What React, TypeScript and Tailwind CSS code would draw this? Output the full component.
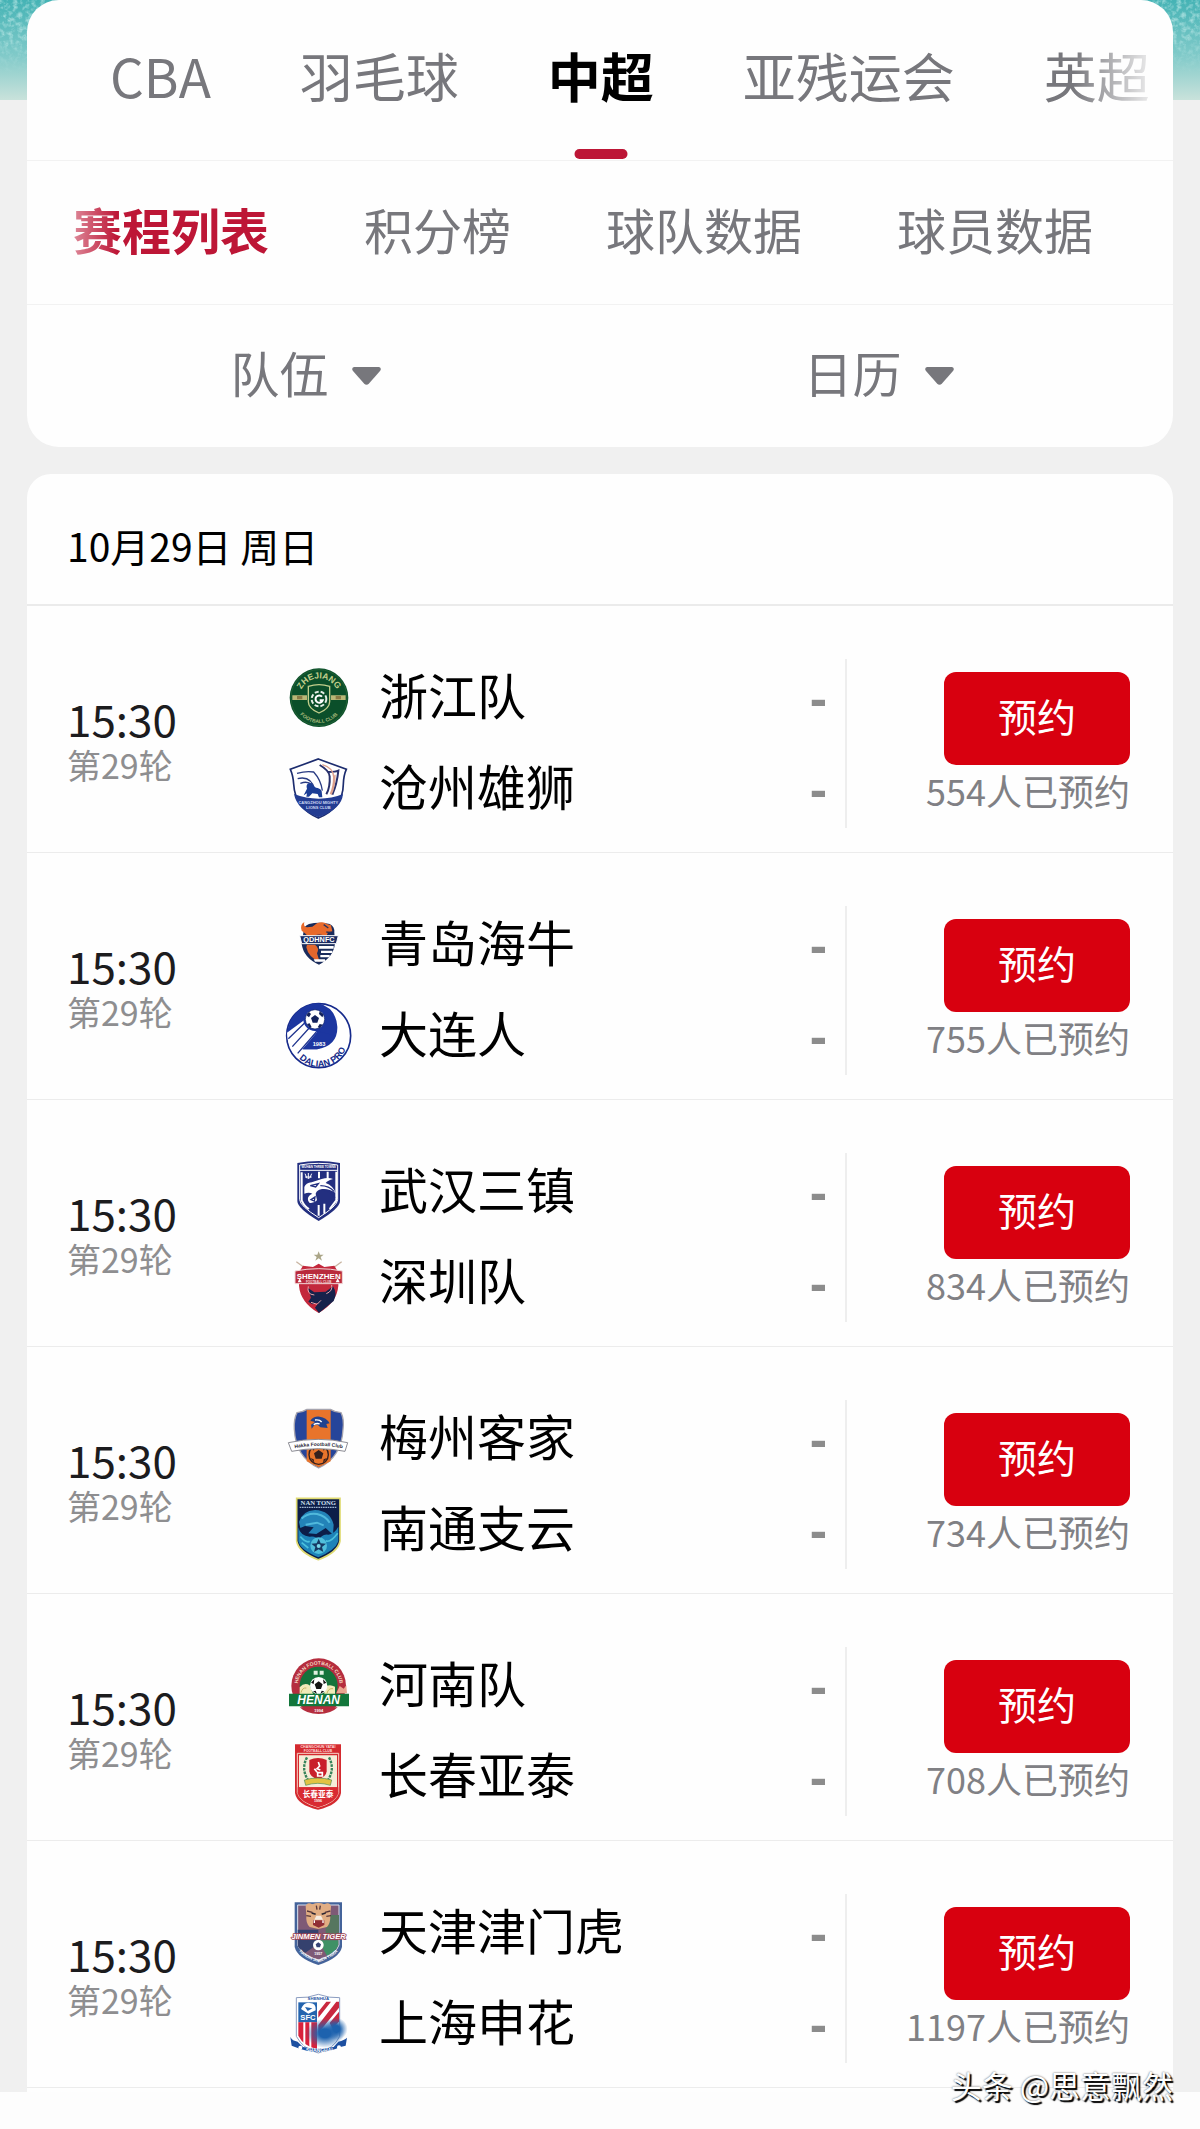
import { useState, type ReactNode } from "react";
import clsx from "clsx";

function Crest({ viewBox, label, children }: { viewBox: string; label: string; children: ReactNode }) {
  return (
    <svg
      viewBox={viewBox}
      className="h-[68px] w-[68px] shrink-0"
      role="img"
      aria-label={label}
      fontFamily="Liberation Sans, sans-serif"
      fontWeight="bold"
      textAnchor="middle"
    >
      {children}
    </svg>
  );
}

function Zhejiang() {
  return (
    <Crest viewBox="46 42 204 204" label="浙江队">
      <circle cx="148" cy="143" r="88" fill="#0b4f2a" />
      <circle cx="148" cy="143" r="84" fill="none" stroke="#2c6a3a" strokeWidth="2" />
      <path id="zj-top" d="M90 143a58 58 0 0 1 116 0" fill="none" />
      <path id="zj-bottom" d="M72 143a76 76 0 0 0 152 0" fill="none" />
      <text fontSize="26" fill="#c3cf8c">
        <textPath href="#zj-top" startOffset="50%">ZHEJIANG</textPath>
      </text>
      <text fontSize="15" fill="#a9bb7c">
        <textPath href="#zj-bottom" startOffset="50%">FOOTBALL CLUB</textPath>
      </text>
      <path d="M68 136h44v14H68zM184 136h44v14h-44z" fill="#b9b877" />
      <path d="M82 138h16v10H82zM198 138h16v10h-16z" fill="#8a7a45" />
      <path d="M116 109q32-10 64 0v46q0 20-32 34-32-14-32-34z" fill="#0b4f2a" stroke="#c3cf8c" strokeWidth="4" />
      <circle cx="148" cy="147" r="22" fill="none" stroke="#e4efe6" strokeWidth="6" strokeDasharray="12 6" />
      <path d="M157 140a11 11 0 1 0 2 11h-9" fill="none" stroke="#fff" strokeWidth="6" />
    </Crest>
  );
}

function Cangzhou() {
  return (
    <Crest viewBox="46 315 204 204" label="沧州雄狮">
      <path d="M146 327l84 31q-8 17-9 44-1 72-75 102-70-30-74-102-2-27-10-44z" fill="#fff" stroke="#1c2c6e" strokeWidth="5" />
      <path d="M82 370q28-8 50-4 22 24 26 56M84 386q40-10 52 34M92 400q22-8 34 4" fill="none" stroke="#2a3c83" strokeWidth="4" />
      <path d="M150 345q28 16 30 34 2 32-10 54M176 366q22 0 30-4-4 40-18 72" fill="none" stroke="#28306c" strokeWidth="6" />
      <path d="M158 344q34 10 34 38 0 30-10 50M196 374q0 36-12 60" fill="none" stroke="#dca08c" strokeWidth="4" />
      <path d="M102 436l10-20q-4-10 4-16l10 0q8 14 18 14 10 2 12 10l2 18h-10l-4-10-16-2-10 10h-8l2-10z" fill="#1b3d96" />
      <path d="M73 432q36 14 74 14 40 0 73-14-4 46-74 70-64-22-73-70z" fill="#233c92" />
      <text x="146" y="463" fontSize="12" fill="#cdd8f4">CANGZHOU MIGHTY</text>
      <text x="146" y="478" fontSize="12" fill="#cdd8f4">LIONS CLUB</text>
    </Crest>
  );
}

function Qingdao() {
  return (
    <Crest viewBox="46 33 204 204" label="青岛海牛">
      <path d="M102 92q0-14 16-20 30-8 62 0 16 8 14 26l2 32q-4 42-48 64-46-20-52-62z" fill="#1a2c5c" />
      <path d="M96 92q-6-18 8-26-4 14 8 16l16-2 14-10q18-8 30 2l12 4 4 18-12 2-6 12q-20-8-34-2l-18 6-12-12z" fill="#e96a2b" />
      <path d="M162 74l14 10M170 96l14 2" stroke="#2b3157" strokeWidth="4" />
      <path d="M90 107h116l-6 24H96z" fill="#1c2c63" stroke="#fff" strokeWidth="3" />
      <text x="148" y="127" fontSize="22" fill="#fff">QDHNFC</text>
      <path d="M112 134h24q14 10 6 26l8 26q-34-14-40-44z" fill="#e3662d" />
      <path d="M148 138h44v8h-44zM154 152h34v7h-34zM152 165h28v7h-28zM132 178h34v7h-30z" fill="#fff" />
    </Crest>
  );
}

function Dalian() {
  return (
    <Crest viewBox="46 306 204 204" label="大连人">
      <circle cx="147" cy="407" r="96" fill="#fff" stroke="#162a8c" strokeWidth="5" />
      <path d="M53 402a94 94 0 0 1 94-92q52 14 56 70 2 58-62 68H100l-20-34z" fill="#1c36a0" />
      <path d="M52 398l52-38 40 40-62 68q-28-24-30-70z" fill="#fff" />
      <path d="M56 416l52-50M68 440l56-62M84 460l56-64" stroke="#20358f" strokeWidth="4" />
      <path d="M124 418l20-24 44 10q-10 30-44 44H98z" fill="#1c36a0" />
      <circle cx="136" cy="358" r="35" fill="#1c36a0" />
      <circle cx="136" cy="358" r="29" fill="#fff" stroke="#0e2168" strokeWidth="2" />
      <path d="M136 345l12 9-5 14h-14l-5-14zM110 346l8-10 6 6-6 10zM150 334l12 10-4 8-10-10zM112 372l8-2 6 12-6 2zM150 372l10 2-10 10-6-2z" fill="#13225c" />
      <text x="148" y="439" fontSize="17" fill="#fff">1983</text>
      <path id="dl-ring" d="M64 424a85 85 0 0 0 170-18" fill="none" />
      <text fontSize="27" fill="#152a88">
        <textPath href="#dl-ring" startOffset="53%">DALIAN PRO</textPath>
      </text>
    </Crest>
  );
}

function Wuhan() {
  return (
    <Crest viewBox="46 39 204 204" label="武汉三镇">
      <path d="M83 54q64-12 128 0v114q0 22-64 60-64-38-64-60z" fill="#232f80" />
      <path d="M90 60q57-10 114 0v104q0 18-57 54-57-36-57-54z" fill="none" stroke="#fff" strokeWidth="3" />
      <text x="147" y="70" fontSize="9" fill="#fff">WUHAN THREE TOWNS</text>
      <path d="M90 76h114" stroke="#fff" strokeWidth="3" />
      <path d="M96 82v84q8 18 22 26M148 80v20M174 80v26M200 80v86l-20 26M147 180v32M164 176v30" fill="none" stroke="#fff" strokeWidth="6" />
      <path d="M106 86l6 14M116 84v18M126 86l-6 14M106 96h20" stroke="#fff" strokeWidth="3" />
      <path d="M104 126q4-12 22-14l30-10q20-6 34 0-16 4-22 12 22 8 30 30-20-14-40-12-16 2-20 14l4 20q-10 10-22 8-8-8-4-18 4-8 12-10-10-6-24 0z" fill="#fff" />
      <path d="M122 122l24-6-8 10zM152 122q26 0 42 18M156 134q24 4 40 24M124 164l12-8-2 12z" fill="none" stroke="#232f80" strokeWidth="4" />
    </Crest>
  );
}

function Shenzhen() {
  return (
    <Crest viewBox="46 312 204 204" label="深圳队">
      <path d="M147 319l4 10h11l-9 7 4 11-10-7-10 7 4-11-9-7h11z" fill="#aaa587" />
      <path d="M80 350l30 22M216 350l-30 22" stroke="#c9b5a2" strokeWidth="4" />
      <path d="M100 362l30 4 17-10 17 10 30-4 12 20v40q-4 50-59 82-55-32-59-82v-40z" fill="#c3283c" />
      <path d="M76 378q72-14 142 0v38H76z" fill="#b92a3c" stroke="#f3d9da" strokeWidth="3" />
      <text x="147" y="402" fontSize="24" fill="#fff">SHENZHEN</text>
      <text x="147" y="414" fontSize="9" fill="#f6dada">FOOTBALL CLUB</text>
      <path d="M114 428l20 14 34-2 22-16q14 22 2 44l-44 36-12-16 10-14-18 4-12-8 8-12z" fill="#17224b" />
      <path d="M116 424q-6 24 18 26M186 420q4 18-16 26M124 472l18 6 12-12" fill="none" stroke="#e9a2a8" strokeWidth="3" />
      <path d="M84 412l6-12 6 12zM198 412l6-12 6 12z" fill="#fff" />
    </Crest>
  );
}

function Meizhou() {
  return (
    <Crest viewBox="46 45 204 204" label="梅州客家">
      <path d="M82 68q18-2 30-10h70q12 8 32 10 10 20 6 50-4 84-73 116-69-32-73-116-2-30 8-50z" fill="#26459a" stroke="#a6a4ae" strokeWidth="4" />
      <path d="M111 60h72v154l-36 18-36-18z" fill="#e8742b" />
      <path d="M122 92q10-14 28-12 20 2 30 20l-10 2 4 12-22-2-8-8-10 2-8 10-2-12 12-8z" fill="#20428f" />
      <path d="M136 90q14-2 20 6M132 104q10-6 18-2" fill="none" stroke="#fff" strokeWidth="4" />
      <circle cx="147" cy="194" r="29" fill="#e8742b" stroke="#35201e" strokeWidth="4" />
      <path d="M147 180l14 10-5 16h-18l-5-16zM126 174l12-6-6 14zM168 174l-12-6 6 14zM122 204l10 4 2 10zM172 204l-10 4-2 10z" fill="#35201e" />
      <path id="mz-band" d="M58 178q90-20 178 0" fill="none" />
      <path d="M56 158q90-20 178 0l-8 26q-80-16-160 0z" fill="#fff" stroke="#8c8c94" strokeWidth="3" />
      <text fontSize="15" fill="#2c2c38">
        <textPath href="#mz-band" startOffset="50%">Hakka Football Club</textPath>
      </text>
    </Crest>
  );
}

function Nantong() {
  return (
    <Crest viewBox="46 318 204 204" label="南通支云">
      <path d="M81 325h130v128q-6 34-65 56-59-22-65-56z" fill="#0c1d48" stroke="#dfda70" strokeWidth="5" />
      <text x="146" y="346" fontSize="20" fill="#cfe0ef" fontFamily="Liberation Serif, serif">NAN TONG</text>
      <path d="M90 352h112" stroke="#9db5d0" strokeWidth="4" strokeDasharray="5 2" />
      <path d="M88 396q10-34 48-36 46 2 56 44l-2 30-22-20-28 18-24-2 16-18-26-4-14 6z" fill="#2383b8" />
      <path d="M96 386q18-18 46-14 26 6 38 26M108 404l34-6 20 8" fill="none" stroke="#51b9dc" strokeWidth="6" />
      <path d="M86 412q6 26 34 28 20-4 26 14 10-24 30-20 18-2 30-24v44q-8 26-60 48-54-22-60-48z" fill="#1d83b8" />
      <path d="M92 440q18 20 28 14M204 430q-22 30-36 22M96 458l20 16" fill="none" stroke="#4bc0dc" strokeWidth="5" />
      <circle cx="147" cy="467" r="25" fill="#51bfdb" />
      <path d="M147 446l6 14 16 1-12 10 4 15-14-8-14 8 4-15-12-10 16-1z" fill="#173a64" />
      <circle cx="147" cy="468" r="6" fill="#7ad8e8" />
    </Crest>
  );
}

function Henan() {
  return (
    <Crest viewBox="46 36 204 204" label="河南队">
      <circle cx="147" cy="137" r="82" fill="#b52d3e" />
      <circle cx="147" cy="137" r="57" fill="#14733b" />
      <path id="hn-top" d="M84 137a63 63 0 0 1 126 0" fill="none" />
      <text fontSize="15" fill="#f4d8c4">
        <textPath href="#hn-top" startOffset="50%">HENAN FOOTBALL CLUB</textPath>
      </text>
      <path d="M132 92h12v12h-12zM150 92h12v12h-12z" fill="#dff0e0" />
      <path d="M90 162v-20q14-16 30-6l10 26zM164 162v-20q14-12 32-2v22z" fill="#f0eab8" />
      <path d="M94 158q4-16 16-14M172 160q4-16 18-14" fill="none" stroke="#c9b666" strokeWidth="3" />
      <path d="M200 160l10-22 12 8 8-10 2 24z" fill="#e9a58f" />
      <circle cx="147" cy="137" r="26" fill="#fff" />
      <path d="M147 124l12 9-5 14h-14l-5-14zM124 128l10-10-2 14zM170 128l-10-10 2 14zM130 154l8-2 4 10zM164 154l-8-2-4 10z" fill="#141414" />
      <path d="M58 161h180v38H58z" fill="#12763b" />
      <text x="147" y="192" fontSize="36" fill="#fff" fontStyle="italic">HENAN</text>
      <path d="M90 202h114q-20 20-57 20t-57-20z" fill="#b52d3e" />
      <text x="147" y="215" fontSize="12" fill="#fff">1994</text>
    </Crest>
  );
}

function Changchun() {
  return (
    <Crest viewBox="46 309 204 204" label="长春亚泰">
      <path d="M76 313h138v146q-6 36-69 50-63-14-69-50z" fill="#d42a2f" />
      <path d="M83 340h124v118q-8 30-62 44-54-14-62-44z" fill="none" stroke="#f7d6c8" strokeWidth="3" />
      <text x="145" y="325" fontSize="11" fill="#ffdcdc">CHANGCHUN YATAI</text>
      <text x="145" y="336" fontSize="10" fill="#ffdcdc">FOOTBALL CLUB</text>
      <path d="M88 346h114v96H88z" fill="#f6ecd8" />
      <path d="M112 352q-18 34 2 66M178 352q18 34-2 66" fill="none" stroke="#35835a" strokeWidth="7" strokeDasharray="8 3" />
      <path d="M119 360q26-12 52 0v34q-2 18-26 24-24-6-26-24z" fill="#c91f2b" />
      <path d="M146 366l4 12-8 8 10 4M134 386l8 10M144 398h14v10h-14z" fill="none" stroke="#fff" strokeWidth="5" />
      <path d="M104 420q40-12 82 0l-4 16q-38-12-74 0z" fill="#e2c342" stroke="#4b8a4c" strokeWidth="2" />
      <path d="M84 442h122v18q-10 28-61 42-51-14-61-42z" fill="#d92a31" />
      <text x="145" y="470" fontSize="23" fill="#fff" fontFamily="Noto Sans CJK SC, sans-serif">长春亚泰</text>
      <text x="145" y="486" fontSize="11" fill="#fff">1996</text>
    </Crest>
  );
}

function Tianjin() {
  return (
    <Crest viewBox="46 42 204 204" label="天津津门虎">
      <path d="M75 52h142v134q-8 34-71 54-63-20-71-54z" fill="#44639a" />
      <path d="M84 60h124v120q-8 28-62 46-54-18-62-46z" fill="#7e5a76" stroke="#dbe2ef" strokeWidth="3" />
      <path d="M84 134h62v42l-40 28q-22-14-22-24z" fill="#35416e" />
      <path d="M168 90h40v60l-40 20z" fill="#56765f" />
      <path d="M146 166h60v14q-6 20-34 32z" fill="#3f9166" />
      <path d="M108 64q4-14 20-6 18-8 36 0 16-8 20 6l-2 30q0 22-10 32l-26 6-26-6q-12-12-10-34z" fill="#e1ad83" />
      <path d="M112 78l16 4M110 92l14 2M182 78l-16 4M184 92l-14 2M140 62l2 12M152 62l-2 12" stroke="#57373b" strokeWidth="4" />
      <path d="M126 84l12 4M168 84l-12 4" stroke="#2b2633" strokeWidth="5" />
      <path d="M140 92h14l6 12h-26z" fill="#f7ece1" />
      <path d="M130 106h34v14l-17 8-17-8z" fill="#902f36" />
      <path d="M134 106v8M160 106v8" stroke="#fff" strokeWidth="4" />
      <text x="147" y="162" fontSize="23" fontStyle="italic" fill="#fff" stroke="#9c4354" strokeWidth="5" paintOrder="stroke">
        JINMEN TIGER
      </text>
      <circle cx="146" cy="180" r="16" fill="#fff" />
      <path d="M146 172l8 6-3 9h-10l-3-9z" fill="#364477" />
      <path id="tj-bottom" d="M78 182q8 30 68 50 60-20 68-50" fill="none" />
      <text fontSize="12" fill="#fff">
        <textPath href="#tj-bottom" startOffset="50%">TIANJIN JINMEN TIGER</textPath>
      </text>
      <text x="146" y="210" fontSize="11" fill="#fff">1957</text>
    </Crest>
  );
}

function Shenhua() {
  return (
    <Crest viewBox="46 315 204 204" label="上海申花">
      <radialGradient id="sh-glow">
        <stop offset="0.3" stopColor="#1d62ae" />
        <stop offset="1" stopColor="#1d62ae" stopOpacity="0" />
      </radialGradient>
      <path d="M80 338q34 2 66-10 34 12 64 10v116q-18 38-64 50-46-12-66-50z" fill="#fff" stroke="#8a9cc0" strokeWidth="3" />
      <path d="M86 352h56v60H86z" fill="#2464ae" />
      <path d="M94 372q10-22 26-18 20 0 18 22l-22 10z" fill="#fff" />
      <path d="M106 366l22 4-14 8z" fill="#2464ae" />
      <text x="115" y="405" fontSize="23" fill="#fff">SFC</text>
      <path d="M86 412h56v80q-40-8-56-40z" fill="#d8223b" />
      <path d="M104 412v70M122 412v78" stroke="#fff" strokeWidth="6" />
      <path d="M146 380l24-30h14l-38 48zM146 420l54-70h8v18l-62 76zM180 414l28-34v30l-20 20z" fill="#c9283f" />
      <text x="146" y="345" fontSize="13" fill="#2450a0">SHENHUA</text>
      <path d="M62 456q6 12 22 14l16 16q46 10 92 0l14-16q18-4 26-12l-4 24-16 4q-64 30-136 0l-10-4z" fill="#1c4fa0" />
      <ellipse cx="166" cy="445" rx="58" ry="44" fill="url(#sh-glow)" />
      <ellipse cx="200" cy="432" rx="34" ry="34" fill="url(#sh-glow)" />
      <circle cx="92" cy="488" r="6" fill="#fff" />
      <circle cx="208" cy="487" r="6" fill="#fff" />
      <text x="149" y="500" fontSize="15" fill="#fff">SHANGHAI</text>
    </Crest>
  );
}

const leagues = ["CBA", "羽毛球", "中超", "亚残运会", "英超"];
const sections = ["赛程列表", "积分榜", "球队数据", "球员数据"];

const matches = [
  { home: "浙江队", away: "沧州雄狮", HomeCrest: Zhejiang, AwayCrest: Cangzhou, booked: 554 },
  { home: "青岛海牛", away: "大连人", HomeCrest: Qingdao, AwayCrest: Dalian, booked: 755 },
  { home: "武汉三镇", away: "深圳队", HomeCrest: Wuhan, AwayCrest: Shenzhen, booked: 834 },
  { home: "梅州客家", away: "南通支云", HomeCrest: Meizhou, AwayCrest: Nantong, booked: 734 },
  { home: "河南队", away: "长春亚泰", HomeCrest: Henan, AwayCrest: Changchun, booked: 708 },
  { home: "天津津门虎", away: "上海申花", HomeCrest: Tianjin, AwayCrest: Shenhua, booked: 1197 },
];

function Banner() {
  return (
    <svg className="absolute inset-x-0 top-0 h-[100px] w-full" aria-hidden="true">
      <defs>
        <linearGradient id="sea" x1="0" y1="0" x2="0" y2="1">
          <stop offset="0" stopColor="#45b3b5" />
          <stop offset="0.55" stopColor="#80cac9" />
          <stop offset="1" stopColor="#c9e2db" />
        </linearGradient>
        <linearGradient id="sea-fade" x1="0" y1="0" x2="0" y2="1">
          <stop offset="0.3" stopColor="#888" />
          <stop offset="0.75" stopColor="#000" />
        </linearGradient>
        <mask id="sea-mask">
          <rect width="100%" height="100%" fill="url(#sea-fade)" />
        </mask>
        <filter id="ripple">
          <feTurbulence type="fractalNoise" baseFrequency="0.22" numOctaves="3" seed="4" />
          <feColorMatrix values="0 0 0 0 0.75  0 0 0 0 0.95  0 0 0 0 0.93  2.4 0 0 0 -1" />
        </filter>
      </defs>
      <rect width="100%" height="100%" fill="url(#sea)" />
      <g mask="url(#sea-mask)">
        <rect width="100%" height="100%" filter="url(#ripple)" />
      </g>
    </svg>
  );
}

function FilterSelect({ label }: { label: string }) {
  return (
    <label className="flex flex-1 items-center justify-center gap-[22px] pr-4">
      <select
        aria-label={label}
        className="mb-2 appearance-none bg-transparent text-[49px] leading-[64px] text-[#77777c] outline-none"
      >
        <option>{label}</option>
      </select>
      <svg viewBox="0 0 29 18" className="pointer-events-none h-[18px] w-[29px]" aria-hidden="true">
        <path d="M2 0h25q3 1 1 4L17 16.500q-2.500 2.500-5 0L1 4q-2-3 1-4z" fill="#77777c" />
      </svg>
    </label>
  );
}

function TeamLine({ name, crest }: { name: string; crest: ReactNode }) {
  return (
    <div className="flex h-[78px] items-center">
      {crest}
      <span className="ml-[26px] flex-1 whitespace-nowrap pb-2 text-[49px] leading-[64px] text-black">{name}</span>
      <span className="font-['Liberation_Sans',sans-serif] text-[52px] font-bold leading-[64px] text-[#8c8c8c]">-</span>
    </div>
  );
}

function MatchRow({ match }: { match: (typeof matches)[number] }) {
  const { home, away, HomeCrest, AwayCrest, booked } = match;
  return (
    <li className="flex border-b border-[#ececec] pb-6 pl-10 pr-[43px] pt-[53px]">
      <div className="flex w-[218px] shrink-0 flex-col justify-center pb-2">
        <time className="text-[44px] leading-[50px] text-[#1c1c1e]">15:30</time>
        <span className="text-[34px] leading-[44px] text-[#8e8e90]">第29轮</span>
      </div>
      <div className="flex min-w-0 flex-1 flex-col gap-[13px] border-r-2 border-[#eeeeee] pr-[18px]">
        <TeamLine name={home} crest={<HomeCrest />} />
        <TeamLine name={away} crest={<AwayCrest />} />
      </div>
      <div className="flex w-[283px] shrink-0 flex-col items-end justify-center">
        <button className="h-[93px] w-[186px] rounded-xl bg-[#d8000f] pb-2 text-[39px] leading-[50px] text-white">
          预约
        </button>
        <span className="whitespace-nowrap text-[36px] leading-[50px] text-[#808084]">{booked}人已预约</span>
      </div>
    </li>
  );
}

export default function App() {
  const [league, setLeague] = useState("中超");
  const [section, setSection] = useState("赛程列表");

  return (
    <div className="relative min-h-screen bg-[#fdfdfd] font-['Noto_Sans_CJK_SC',sans-serif]">
      <div className="relative bg-[#f0f0f0] px-[27px]">
        <Banner />

        <header className="relative rounded-[32px] bg-[#fefefe]">
          <nav className="border-b border-[#f2f2f2]">
            <div className="flex h-[160px] gap-[89px] overflow-x-auto pl-[83px] [mask-image:linear-gradient(to_right,black_calc(100%-100px),transparent_calc(100%-10px))] [scrollbar-width:none]">
              {leagues.map((name) => (
                <button
                  key={name}
                  onClick={() => setLeague(name)}
                  className={clsx(
                    "relative shrink-0 pb-2.5 text-[53px] leading-[70px]",
                    name === league ? "font-bold text-black" : "text-[#77777c]"
                  )}
                >
                  {name}
                  {name === league && (
                    <span className="absolute bottom-px left-1/2 h-2.5 w-[53px] -translate-x-1/2 rounded-full bg-[#bd1636]" />
                  )}
                </button>
              ))}
            </div>
          </nav>

          <nav className="border-b border-[#f2f2f2]">
            <div className="flex h-[143px] gap-[95px] overflow-x-auto pl-[46px] [mask-image:linear-gradient(to_right,transparent,black_90px)] [scrollbar-width:none]">
              {sections.map((name) => (
                <button
                  key={name}
                  onClick={() => setSection(name)}
                  className={clsx(
                    "shrink-0 pb-2 text-[49px] leading-[64px]",
                    name === section ? "font-bold text-[#bd1636]" : "text-[#77777c]"
                  )}
                >
                  {name}
                </button>
              ))}
            </div>
          </nav>

          <div className="flex h-[142px]">
            <FilterSelect label="队伍" />
            <FilterSelect label="日历" />
          </div>
        </header>

        <section className="relative mt-[27px] rounded-t-3xl bg-[#fefefe] pb-1">
          <h2 className="flex h-[132px] items-center border-b-2 border-[#ebebeb] pl-10 pt-3 text-[39px] leading-[50px] text-black">
            10月29日 周日
          </h2>
          <ul>
            {matches.map((match) => (
              <MatchRow key={match.home} match={match} />
            ))}
          </ul>
        </section>
      </div>

      <footer className="h-[37px]" />
      <p className="absolute bottom-[22px] right-[27px] text-[31px] leading-[44px] text-white [text-shadow:2px_2px_1px_#000,0_0_2px_#555]">
        头条 @思意飘然
      </p>
    </div>
  );
}
